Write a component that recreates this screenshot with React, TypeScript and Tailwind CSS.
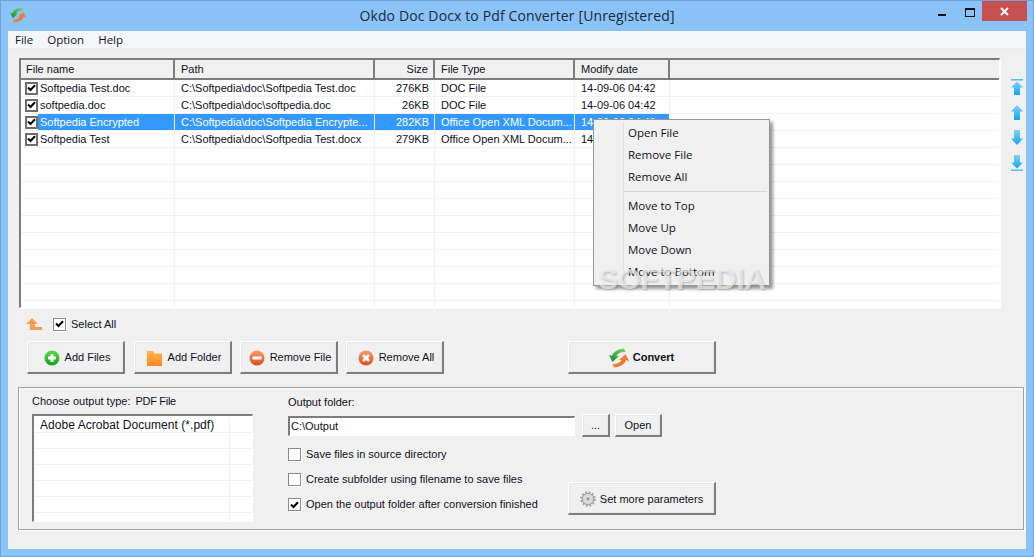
import React from 'react';

const rows = [
  { name: 'Softpedia Test.doc', path: 'C:\\Softpedia\\doc\\Softpedia Test.doc', size: '276KB', type: 'DOC File', date: '14-09-06 04:42' },
  { name: 'softpedia.doc', path: 'C:\\Softpedia\\doc\\softpedia.doc', size: '26KB', type: 'DOC File', date: '14-09-06 04:42' },
  { name: 'Softpedia Encrypted', path: 'C:\\Softpedia\\doc\\Softpedia Encrypte...', size: '282KB', type: 'Office Open XML Docum...', date: '14-09-06 04:42', selected: true },
  { name: 'Softpedia Test', path: 'C:\\Softpedia\\doc\\Softpedia Test.docx', size: '279KB', type: 'Office Open XML Docum...', date: '14-09-06 04:42' },
  { name: '', path: '', size: '', type: '', date: '' },
  { name: '', path: '', size: '', type: '', date: '' },
  { name: '', path: '', size: '', type: '', date: '' },
  { name: '', path: '', size: '', type: '', date: '' },
  { name: '', path: '', size: '', type: '', date: '' },
  { name: '', path: '', size: '', type: '', date: '' },
  { name: '', path: '', size: '', type: '', date: '' },
  { name: '', path: '', size: '', type: '', date: '' },
  { name: '', path: '', size: '', type: '', date: '' },
  { name: '', path: '', size: '', type: '', date: '' },
];

const Check: React.FC<{ on?: boolean; thick?: boolean }> = ({ on, thick }) => (
  <span
    className={`flex h-[13px] w-[13px] shrink-0 items-center justify-center bg-white ${
      thick ? 'border-2 border-[#6d6d6d]' : 'border border-[#8a8a8a] shadow-[1px_1px_0_#fff]'
    }`}
  >
    {on && (
      <svg width="9" height="8" viewBox="0 0 9 8">
        <path d="M1 3.5 L3.5 6 L8 1.2" fill="none" stroke="#000" strokeWidth="2" />
      </svg>
    )}
  </span>
);

const swirlArm = 'M15 0.5 L16.5 4 C12 4 8.5 5.5 7.5 8 L10 8 L3.5 14 L0 7 L3 8 C4 4 9 1 15 0.5 Z';

const Swirl: React.FC<{ size: number; id: string }> = ({ size, id }) => (
  <svg width={size} height={size} viewBox="0 0 20 20">
    <defs>
      <linearGradient id={`${id}g`} x1="1" y1="0" x2="0" y2="1">
        <stop offset="0" stopColor="#7fd968" />
        <stop offset="1" stopColor="#0c8a2e" />
      </linearGradient>
      <linearGradient id={`${id}o`} x1="0" y1="0" x2="1" y2="1">
        <stop offset="0" stopColor="#e2561a" />
        <stop offset="1" stopColor="#fbab4a" />
      </linearGradient>
    </defs>
    <path d={swirlArm} fill={`url(#${id}g)`} />
    <path d={swirlArm} fill={`url(#${id}o)`} transform="rotate(180 10 10)" />
  </svg>
);

const NavArrow: React.FC<{ down?: boolean; bar?: boolean; id: string }> = ({ down, bar, id }) => (
  <svg width="14" height="17" viewBox="0 0 14 17" className={down ? 'rotate-180' : ''}>
    <defs>
      <linearGradient id={id} x1="0" y1={down ? '1' : '0'} x2="0" y2={down ? '0' : '1'}>
        <stop offset="0" stopColor="#7fd4f5" />
        <stop offset="1" stopColor="#12a5ec" />
      </linearGradient>
    </defs>
    {bar && <rect x="1" y="0" width="12" height="1.6" fill="#5cc0ee" />}
    <path d={bar ? 'M7 2.5 L13 8.5 L10 8.5 L10 16 L4 16 L4 8.5 L1 8.5 Z' : 'M7 1 L13 7.5 L10 7.5 L10 16 L4 16 L4 7.5 L1 7.5 Z'} fill={`url(#${id})`} />
  </svg>
);

const Btn: React.FC<{ className: string; children: React.ReactNode }> = ({ className, children }) => (
  <div
    className={`flex items-center justify-center border-t border-l border-r-2 border-b-2 border-t-white border-l-white border-r-[#7d7d7d] border-b-[#7d7d7d] bg-[#f0f0f0] shadow-[inset_0_0_0_1px_#e8e8e8] ${className}`}
  >
    {children}
  </div>
);

const CircleIcon: React.FC<{ id: string; from: string; to: string; kind: 'plus' | 'minus' | 'x' }> = ({ id, from, to, kind }) => (
  <svg width="16" height="16" viewBox="0 0 16 16" className="mr-[5px]">
    <defs>
      <linearGradient id={id} x1="0" y1="0" x2="0" y2="1">
        <stop offset="0" stopColor={from} />
        <stop offset="1" stopColor={to} />
      </linearGradient>
    </defs>
    <circle cx="8" cy="8" r="7.5" fill={`url(#${id})`} />
    {kind === 'plus' && <path d="M8 4 V12 M4 8 H12" stroke="#fff" strokeWidth="3" />}
    {kind === 'minus' && <path d="M3.5 8 H12.5" stroke="#fff" strokeWidth="3" />}
    {kind === 'x' && <path d="M5 5 L11 11 M11 5 L5 11" stroke="#fff" strokeWidth="2.6" />}
  </svg>
);

const Gear = () => (
  <svg width="16" height="16" viewBox="0 0 16 16" className="mr-[4px]">
    <circle cx="8" cy="8" r="5.7" fill="#d8d8d8" stroke="#9a9a9a" strokeWidth="1" />
    <circle cx="8" cy="8" r="6.8" fill="none" stroke="#a8a8a8" strokeWidth="2" strokeDasharray="2 1.6" />
    <circle cx="8" cy="8" r="2.4" fill="#a0a0a0" stroke="#eee" strokeWidth="1" />
  </svg>
);

const MenuItem: React.FC<{ label: string }> = ({ label }) => (
  <div className="flex h-[22px] items-center pl-[34px] pb-[1px] font-['Open_Sans',sans-serif] text-[11.5px] leading-none text-[#10101a]">{label}</div>
);

const cols = 'border-r border-[#f0f0f0]';

export default function App() {
  return (
    <div className="flex h-[557px] w-[1034px] flex-col overflow-hidden border border-[#6aa4dc] bg-[#89c3f8] font-['Liberation_Sans',sans-serif] text-[11px] text-[#10101a]">
      {/* Title bar */}
      <div className="relative flex h-[30px] shrink-0 items-center justify-center">
        <span className="absolute left-[9px] top-[6px]">
          <Swirl size={16} id="t" />
        </span>
        <span className="font-['Open_Sans',sans-serif] text-[14px] leading-none tracking-[0.13px] text-[#1c2a3a]">Okdo Doc Docx to Pdf Converter [Unregistered]</span>
        <div className="absolute right-[6px] top-0 flex items-start">
          <div className="mt-[13px] mr-[19px] h-[2px] w-[8px] bg-[#111]" />
          <div className="mt-[7px] mr-[7px] h-[9px] w-[10px] border border-t-2 border-[#111]" />
          <div className="flex h-[20px] w-[45px] items-center justify-center bg-[#c75050]">
            <svg width="9" height="9" viewBox="0 0 9 9">
              <path d="M1 1 L8 8 M8 1 L1 8" stroke="#fff" strokeWidth="1.8" />
            </svg>
          </div>
        </div>
      </div>

      {/* Client area */}
      <div className="relative mx-[7px] mb-[7px] flex flex-1 flex-col bg-[#f0f0f0]">
        {/* Menu */}
        <div className="flex h-[18px] shrink-0 items-center gap-[14px] border-b border-[#ececec] bg-[#f5f6f7] pl-[7px] font-['Open_Sans',sans-serif] text-[11.5px] leading-none">
          <span>File</span>
          <span>Option</span>
          <span>Help</span>
        </div>

        {/* File list + move arrows */}
        <div className="mt-[9px] flex shrink-0 pl-[11px]">
          <div className="h-[250px] w-[981px] overflow-hidden border-t-2 border-l-2 border-r border-b border-t-[#7c7c7c] border-l-[#7c7c7c] border-r-white border-b-white bg-white shadow-[1px_1px_0_#fff]">
            <div className="flex h-[18px] items-center border-b-2 border-[#7c7c7c] bg-[#f0f0f0] box-content">
              <div className="flex h-full w-[154px] items-center border-r-2 border-[#7c7c7c] pl-[5px]">File name</div>
              <div className="flex h-full w-[200px] items-center border-r-2 border-[#7c7c7c] pl-[6px]">Path</div>
              <div className="flex h-full w-[60px] items-center justify-end border-r-2 border-[#7c7c7c] pr-[5px]">Size</div>
              <div className="flex h-full w-[140px] items-center border-r-2 border-[#7c7c7c] pl-[6px]">File Type</div>
              <div className="flex h-full w-[95px] items-center border-r-2 border-[#7c7c7c] pl-[6px]">Modify date</div>
            </div>
            <div>
              {rows.map((r, i) => (
                <div key={i} className="flex h-[17px] items-center border-b border-[#f0f0f0] leading-none">
                  <div className={`flex h-full w-[154px] items-center ${cols}`}>
                    <span className="flex h-full w-[17px] shrink-0 items-center pl-[4px]">{r.name && <Check on thick />}</span>
                    {r.name && (
                      <span className={`flex h-full flex-1 items-center pl-[2px] ${r.selected ? 'bg-[#3399ff] text-white' : ''}`}>{r.name}</span>
                    )}
                  </div>
                  <div className={`flex h-full w-[200px] items-center pl-[6px] ${cols} ${r.selected ? 'bg-[#3399ff] text-white' : ''}`}>{r.path}</div>
                  <div className={`flex h-full w-[60px] items-center justify-end pr-[5px] ${cols} ${r.selected ? 'bg-[#3399ff] text-white' : ''}`}>{r.size}</div>
                  <div className={`flex h-full w-[140px] items-center pl-[6px] ${cols} ${r.selected ? 'bg-[#3399ff] text-white' : ''}`}>{r.type}</div>
                  <div className={`flex h-full w-[95px] items-center pl-[6px] ${cols} ${r.selected ? 'bg-[#3399ff] text-white' : ''}`}>{r.date}</div>
                </div>
              ))}
            </div>
          </div>
          <div className="ml-[10px] flex flex-col gap-[8px] pt-[21px]">
            <NavArrow bar id="a1" />
            <NavArrow id="a2" />
            <NavArrow down id="a3" />
            <NavArrow down bar id="a4" />
          </div>
        </div>

        {/* Select all */}
        <div className="mt-[8px] flex h-[16px] shrink-0 items-center pl-[18px]">
          <svg width="16" height="12" viewBox="0 0 16 12">
            <path d="M0 6 L6 0 L12 6 L9 6 L9 9 L16 9 L16 12 L4 12 L4 6 Z" fill="#fb9d4e" />
          </svg>
          <span className="ml-[11px]"><Check on /></span>
          <span className="ml-[5px]">Select All</span>
        </div>

        {/* Action buttons */}
        <div className="mt-[9px] flex shrink-0 pl-[19px]">
          <div className="flex gap-[8px]">
            <Btn className="h-[33px] w-[98px] pt-[1px] pl-[3px]">
              <CircleIcon id="c1" from="#5fdc4a" to="#10a018" kind="plus" />
              Add Files
            </Btn>
            <Btn className="ml-[1px] h-[33px] w-[98px] pt-[1px] pl-[3px]">
              <svg width="15" height="16" viewBox="0 0 15 16" className="mr-[6px]">
                <defs>
                  <linearGradient id="fo" x1="0" y1="0" x2="0" y2="1">
                    <stop offset="0" stopColor="#ffb84a" />
                    <stop offset="1" stopColor="#fb8424" />
                  </linearGradient>
                </defs>
                <path d="M0 1 L6 1 L7.5 3.5 L15 3.5 L15 16 L0 16 Z" fill="url(#fo)" />
              </svg>
              Add Folder
            </Btn>
            <Btn className="h-[33px] w-[98px] pt-[1px] pl-[3px]">
              <CircleIcon id="c2" from="#fb9a6a" to="#e2481c" kind="minus" />
              Remove File
            </Btn>
            <Btn className="h-[33px] w-[98px] pt-[1px] pl-[3px]">
              <CircleIcon id="c3" from="#fb9a6a" to="#e2481c" kind="x" />
              Remove All
            </Btn>
          </div>
          <Btn className="ml-[124px] h-[33px] w-[148px] pt-[1px] font-bold">
            <span className="mr-[4px]"><Swirl size={20} id="b" /></span>
            Convert
          </Btn>
        </div>

        {/* Output panel */}
        <div className="mt-[13px] ml-[10px] flex h-[143px] w-[1006px] shrink-0 border border-[#a0a0a0] shadow-[inset_1px_1px_0_#fff,1px_1px_0_#fff]">
          <div className="ml-[13px] w-[221px] shrink-0 pt-[7px]">
            <div className="flex h-[13px] items-center gap-[5px] leading-none">
              <span>Choose output type:</span>
              <span className="tracking-[-0.3px]">PDF File</span>
            </div>
            <div className="mt-[6px] h-[108px] overflow-hidden border-t-2 border-l-2 border-r border-b border-t-[#7c7c7c] border-l-[#7c7c7c] border-r-white border-b-white bg-white pt-[1px]">
              {[0, 1, 2, 3, 4, 5, 6].map((i) => (
                <div key={i} className="flex h-[16px] border-b border-[#f0f0f0] text-[12px] leading-none tracking-[0.05px]">
                  <div className="flex w-[196px] items-center border-r border-[#f0f0f0] pl-[6px] pt-[1px]">{i === 0 && 'Adobe Acrobat Document (*.pdf)'}</div>
                </div>
              ))}
            </div>
          </div>
          <div className="ml-[35px] w-[428px] shrink-0 pt-[8px]">
            <div className="flex h-[13px] items-center leading-none">Output folder:</div>
            <div className="mt-[5px] flex h-[22px] items-start">
              <div className="mt-[2px] flex h-[20px] w-[287px] items-center border-t-2 border-l-2 border-r border-b border-t-[#7c7c7c] border-l-[#7c7c7c] border-r-white border-b-white bg-white pl-[1px] leading-none">C:\Output</div>
              <Btn className="ml-[7px] h-[23px] w-[28px]">...</Btn>
              <Btn className="ml-[5px] h-[23px] w-[47px]">Open</Btn>
            </div>
            <div className="mt-[12px] flex items-end justify-between">
              <div className="flex flex-col gap-[12px]">
                <label className="flex h-[13px] items-center gap-[5px] leading-none"><Check />Save files in source directory</label>
                <label className="flex h-[13px] items-center gap-[5px] leading-none"><Check />Create subfolder using filename to save files</label>
                <label className="flex h-[13px] items-center gap-[5px] leading-none"><Check on />Open the output folder after conversion finished</label>
              </div>
              <Btn className="mb-[-4px] h-[33px] w-[148px] pt-[2px]">
                <Gear />
                Set more parameters
              </Btn>
            </div>
          </div>
        </div>

        {/* Context menu */}
        <div className="absolute left-[585px] top-[88px] h-[167px] w-[177px] border border-[#979797] bg-[#f0f0f0] pt-[2px] shadow-[3px_3px_3px_rgba(0,0,0,0.4)]">
          <div className="absolute bottom-[2px] left-[29px] top-[2px] w-px bg-[#e0e0e0]" />
          <MenuItem label="Open File" />
          <MenuItem label="Remove File" />
          <MenuItem label="Remove All" />
          <div className="my-[3px] ml-[30px] mr-[2px] h-px bg-[#d7d7d7]" />
          <MenuItem label="Move to Top" />
          <MenuItem label="Move Up" />
          <MenuItem label="Move Down" />
          <MenuItem label="Move to Bottom" />
        </div>

        {/* Watermark */}
        <div className="pointer-events-none absolute left-[590px] top-[233px] text-[30px] font-bold leading-none tracking-[-0.5px] text-white/60 [text-shadow:1px_1px_2px_rgba(100,100,100,0.4)]">
          SOFTPEDIA
        </div>
      </div>
    </div>
  );
}
